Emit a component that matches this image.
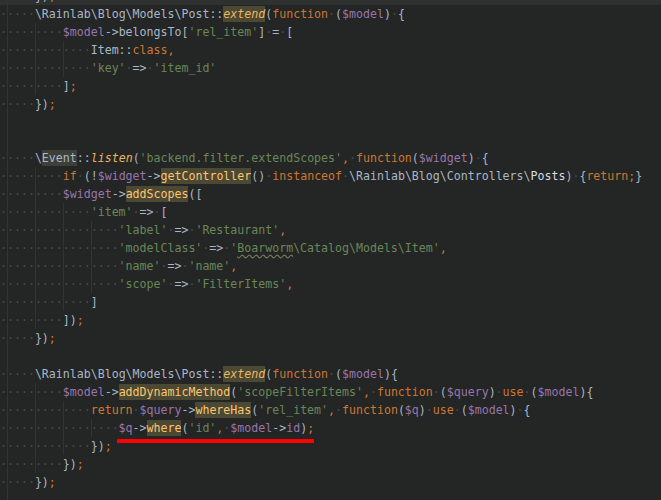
import React from "react";

type Tok = [string, string];

const C: Record<string, string> = {
  d: "text-[#a9b7c6]",
  k: "text-[#cc7832]",
  s: "text-[#6a8759]",
  v: "text-[#9876aa]",
  m: "text-[#ffc66d] bg-[#4b4834] py-[1px]",
  i: "text-[#ebb55f] italic",
  ib: "text-[#ebb55f] italic bg-[#4b4834] py-[1px]",
  e: "text-[#a9b7c6] bg-[#3d3f3a] py-[1px]",
  b: "text-[#d4dce4]",
  w: "text-[#6a8759] underline decoration-wavy decoration-[#6f7f58] underline-offset-2",
  p: "text-[#cc7832]",
};

const S: Tok = ["sp", " "];

type LineDef = { level: number | null; toks: Tok[]; hl?: boolean };

const L = (level: number | null, toks: Tok[], hl = false): LineDef => ({ level, toks, hl });

const lines: LineDef[] = [
  L(0, [["d", "})"], ["p", ";"]], true),
  L(0, [["d", "\\Rainlab\\Blog\\Models\\Post::"], ["ib", "extend"], ["d", "("], ["k", "function"], S, ["d", "("], ["v", "$model"], ["d", ")"], S, ["d", "{"]]),
  L(1, [["v", "$model"], ["d", "->belongsTo["], ["s", "'rel_item'"], ["d", "]"], S, ["d", "="], S, ["d", "["]]),
  L(2, [["d", "Item::"], ["k", "class"], ["p", ","]]),
  L(2, [["s", "'key'"], S, ["d", "=>"], S, ["s", "'item_id'"]]),
  L(1, [["d", "]"], ["p", ";"]]),
  L(0, [["d", "})"], ["p", ";"]]),
  L(null, []),
  L(null, []),
  L(0, [["d", "\\"], ["e", "Event"], ["d", "::"], ["i", "listen"], ["d", "("], ["s", "'backend.filter.extendScopes'"], ["p", ","], S, ["k", "function"], ["d", "("], ["v", "$widget"], ["d", ")"], S, ["d", "{"]]),
  L(1, [["k", "if"], S, ["d", "(!"], ["v", "$widget"], ["d", "->"], ["m", "getController"], ["d", "()"], S, ["k", "instanceof"], S, ["d", "\\Rainlab\\Blog\\Controllers\\"], ["b", "Posts"], ["d", ")"], S, ["d", "{"], ["k", "return"], ["p", ";"], ["d", "}"]]),
  L(1, [["v", "$widget"], ["d", "->"], ["m", "addScopes"], ["d", "(["]]),
  L(2, [["s", "'item'"], S, ["d", "=>"], S, ["d", "["]]),
  L(3, [["s", "'label'"], S, ["d", "=>"], S, ["s", "'Restaurant'"], ["p", ","]]),
  L(3, [["s", "'modelClass'"], S, ["d", "=>"], S, ["s", "'"], ["w", "Boarworm"], ["s", "\\Catalog\\Models\\Item'"], ["p", ","]]),
  L(3, [["s", "'name'"], S, ["d", "=>"], S, ["s", "'name'"], ["p", ","]]),
  L(3, [["s", "'scope'"], S, ["d", "=>"], S, ["s", "'FilterItems'"], ["p", ","]]),
  L(2, [["d", "]"]]),
  L(1, [["d", "])"], ["p", ";"]]),
  L(0, [["d", "})"], ["p", ";"]]),
  L(null, []),
  L(0, [["d", "\\Rainlab\\Blog\\Models\\Post::"], ["ib", "extend"], ["d", "("], ["k", "function"], S, ["d", "("], ["v", "$model"], ["d", "){"]]),
  L(1, [["v", "$model"], ["d", "->"], ["m", "addDynamicMethod"], ["d", "("], ["s", "'scopeFilterItems'"], ["p", ","], S, ["k", "function"], S, ["d", "("], ["v", "$query"], ["d", ")"], S, ["k", "use"], S, ["d", "("], ["v", "$model"], ["d", "){"]]),
  L(2, [["k", "return"], S, ["v", "$query"], ["d", "->"], ["m", "whereHas"], ["d", "("], ["s", "'rel_item'"], ["p", ","], S, ["k", "function"], ["d", "("], ["v", "$q"], ["d", ")"], S, ["k", "use"], S, ["d", "("], ["v", "$model"], ["d", ")"], S, ["d", "{"]]),
  L(3, [["v", "$q"], ["d", "->"], ["m", "where"], ["d", "("], ["s", "'id'"], ["p", ","], S, ["v", "$model"], ["d", "->"], ["v", "id"], ["d", ")"], ["p", ";"]]),
  L(2, [["d", "})"], ["p", ";"]]),
  L(1, [["d", "})"], ["p", ";"]]),
  L(0, [["d", "})"], ["p", ";"]]),
  L(null, []),
];

function Dot() {
  return <span className="text-[#4a4b4b]">·</span>;
}

function Line({ def }: { def: LineDef }) {
  const segs = def.level === null ? 1 : def.level + 1;
  const blank = def.level === null;
  return (
    <div className={`h-[18px] leading-[18px] whitespace-pre ${def.hl ? "bg-[#2f3131]" : ""}`}>
      <span className="inline-block w-[1ch] h-[18px] align-top">{blank ? " " : <Dot />}</span>
      {Array.from({ length: segs }).map((_, i) => (
        <span
          key={i}
          className="inline-block w-[4ch] h-[18px] align-top shadow-[inset_1px_0_0_#323333]"
        >
          {blank ? (
            " "
          ) : (
            <>
              <Dot />
              <Dot />
              <Dot />
              <Dot />
            </>
          )}
        </span>
      ))}
      {def.toks.map(([t, txt], i) =>
        t === "sp" ? <Dot key={i} /> : (
          <span key={i} className={C[t]}>
            {txt}
          </span>
        )
      )}
    </div>
  );
}

export default function App() {
  return (
    <div
      className="relative w-full h-[500px] overflow-hidden bg-[#242525] text-[11.6px]"
      style={{ fontFamily: '"DejaVu Sans Mono", "Liberation Mono", monospace' }}
    >
      <div className="-mt-[13px]">
        {lines.map((l, i) => (
          <Line key={i} def={l} />
        ))}
      </div>
      <div className="absolute left-[117px] top-[439px] w-[197px] h-[4px] bg-[#ff0000]" />
    </div>
  );
}
